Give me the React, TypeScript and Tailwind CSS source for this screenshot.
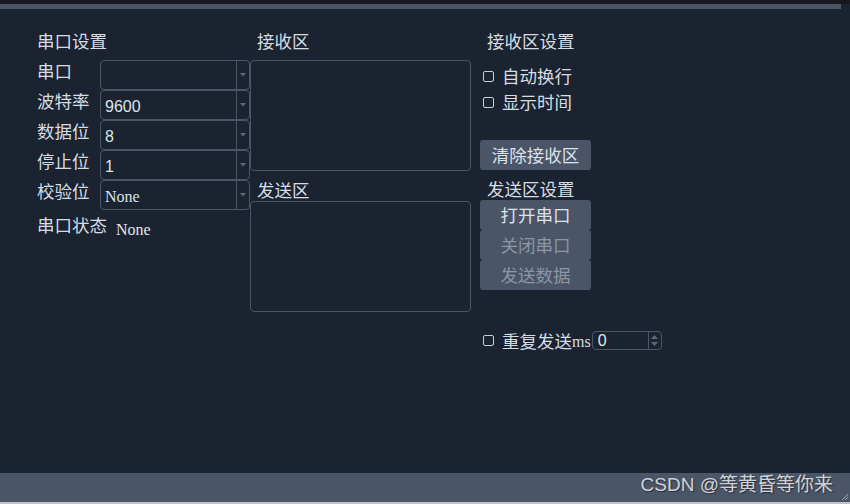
import React from "react";

const cjk = { fontFamily: '"Noto Sans CJK SC", "Noto Sans", sans-serif' };
const serif = { fontFamily: '"Liberation Serif", "Noto Sans CJK SC", serif' };
const sans = { fontFamily: '"Liberation Sans", "Noto Sans CJK SC", sans-serif' };

function Combo({ value, isSerif }: { value?: string; isSerif?: boolean }) {
  return (
    <div className="w-[150px] h-[30px] border border-[#4a5568] rounded-[4px] flex">
      <div
        className="flex-1 pl-[4px] pt-[6px] text-[16px] leading-[20px] text-[#dde3ea]"
        style={isSerif ? serif : sans}
      >
        {value}
      </div>
      <div className="w-[13px] border-l border-[#4a5568] flex items-center justify-center">
        <svg width="6" height="4" viewBox="0 0 6 4">
          <path d="M0 0 L6 0 L3 3.5 Z" fill="#5d6878" />
        </svg>
      </div>
    </div>
  );
}

function Check({ label }: { label: string }) {
  return (
    <div className="flex items-center h-[26px] ml-[3px]">
      <div className="w-[11px] h-[11px] border-[1.5px] border-[#c9ced6] rounded-[2px]" />
      <span className="ml-[8px] text-[17.5px] leading-[20px] text-[#d6dce4]">{label}</span>
    </div>
  );
}

function Btn({ label, disabled }: { label: string; disabled?: boolean }) {
  return (
    <div
      className={
        "w-[111px] h-[30px] bg-[#4a5568] rounded-[3px] flex items-center justify-center text-[17.5px] leading-[20px] " +
        (disabled ? "text-[#8c96a6]" : "text-[#dbe1e8]")
      }
    >
      {label}
    </div>
  );
}

function App() {
  const rows = [
    { label: "串口", value: "" },
    { label: "波特率", value: "9600" },
    { label: "数据位", value: "8" },
    { label: "停止位", value: "1" },
    { label: "校验位", value: "None", serif: true },
  ];
  return (
    <div className="w-[850px] h-[504px] flex flex-col overflow-hidden bg-[#1b2330]" style={cjk}>
      <div className="h-[4px] bg-[#16191e]" />
      <div className="h-[5px] flex">
        <div className="w-[841px] bg-[#4a5568]" />
        <div className="flex-1 bg-[#1b2330]" />
      </div>

      <div className="flex-1 flex pl-[37px] pt-[22px] text-[#d6dce4] text-[17.5px]">
        {/* 左栏 串口设置 */}
        <div className="w-[213px] flex flex-col">
          <div className="h-[29px] leading-[20px]">串口设置</div>
          {rows.map((r) => (
            <div key={r.label} className="flex h-[30px]">
              <div className="w-[63px] pt-[1px] leading-[20px]">{r.label}</div>
              <Combo value={r.value} isSerif={r.serif} />
            </div>
          ))}
          <div className="flex items-center mt-[5px] h-[20px]">
            <span className="leading-[20px]">串口状态</span>
            <span className="ml-[9px] mt-[9px] text-[16px] leading-[18px] text-[#e2e7ee]" style={serif}>
              None
            </span>
          </div>
        </div>

        {/* 中栏 接收区 发送区 */}
        <div className="w-[221px] flex flex-col">
          <div className="h-[29px] pl-[7px] leading-[20px]">接收区</div>
          <div className="h-[111px] border border-[#4a5568] rounded-[4px]" />
          <div className="h-[30px] pl-[7px] pt-[9px] leading-[20px]">发送区</div>
          <div className="h-[111px] border border-[#4a5568] rounded-[4px]" />
        </div>

        {/* 右栏 设置 */}
        <div className="ml-[9px] w-[200px] flex flex-col">
          <div className="h-[29px] pl-[7px] leading-[20px]">接收区设置</div>
          <div className="pt-[3px]">
            <Check label="自动换行" />
            <Check label="显示时间" />
          </div>
          <div className="mt-[25px]">
            <Btn label="清除接收区" />
          </div>
          <div className="h-[30px] pl-[7px] pt-[9px] leading-[20px]">发送区设置</div>
          <Btn label="打开串口" />
          <Btn label="关闭串口" disabled />
          <Btn label="发送数据" disabled />
          <div className="mt-[41px] h-[19px] flex items-center ml-[3px]">
            <div className="w-[11px] h-[11px] border-[1.5px] border-[#c9ced6] rounded-[2px]" />
            <span className="ml-[8px] leading-[20px]">重复发送</span>
            <span className="text-[16px] leading-[18px] mt-[3px]" style={serif}>ms</span>
            <div className="ml-[1px] w-[70px] h-[19px] border border-[#4a5568] rounded-[4px] flex">
              <div className="flex-1 pl-[5px] text-[16px] leading-[17px] text-[#e2e7ee]" style={sans}>
                0
              </div>
              <div className="w-[13px] border-l border-[#4a5568] flex flex-col items-center justify-center gap-[3px]">
                <svg width="7" height="4" viewBox="0 0 7 4">
                  <path d="M0 4 L7 4 L3.5 0 Z" fill="#5d6878" />
                </svg>
                <svg width="7" height="4" viewBox="0 0 7 4">
                  <path d="M0 0 L7 0 L3.5 4 Z" fill="#5d6878" />
                </svg>
              </div>
            </div>
          </div>
        </div>
      </div>

      <div className="h-[29px] bg-[#4a5568] flex items-start justify-end relative">
        <span
          className="mt-[1px] mr-[17px] text-[19px] leading-[22px] text-[#cfd3d8]"
          style={{ ...sans, textShadow: "1px 1px 1px #2a2f36" }}
        >
          CSDN @等黄昏等你来
        </span>
        <svg className="absolute right-[1px] bottom-[1px]" width="9" height="9" viewBox="0 0 9 9">
          <path d="M8 2 L2 8 M8 5 L5 8" stroke="#9aa3ae" strokeWidth="1" />
        </svg>
      </div>
      <div className="h-[2px] bg-[#bfc2c6]" />
    </div>
  );
}

export default App;
